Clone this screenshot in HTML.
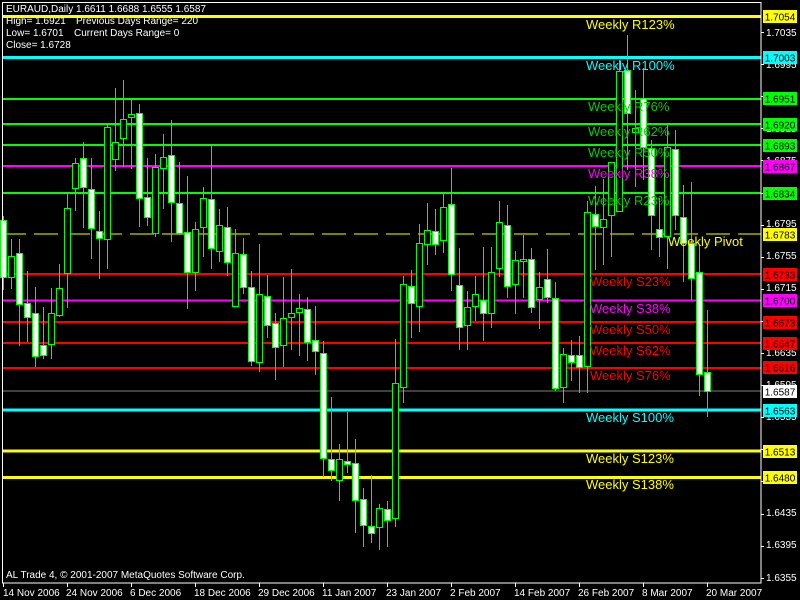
<!DOCTYPE html>
<html><head><meta charset="utf-8"><style>
html,body{margin:0;padding:0;background:#000;width:800px;height:600px;overflow:hidden}
svg{display:block;font-family:"Liberation Sans",sans-serif}
</style></head><body>
<svg id="s" width="800" height="600" xmlns="http://www.w3.org/2000/svg">
<rect width="800" height="600" fill="#000"/>
<g id="lines">
<line x1="2" x2="761" y1="16.5" y2="16.5" stroke="#ffff00" stroke-width="3"/>
<line x1="2" x2="761" y1="57.5" y2="57.5" stroke="#00ffff" stroke-width="3"/>
<line x1="2" x2="761" y1="99" y2="99" stroke="#00ff00" stroke-width="2"/>
<line x1="2" x2="761" y1="124" y2="124" stroke="#00ff00" stroke-width="2"/>
<line x1="2" x2="761" y1="145" y2="145" stroke="#00ff00" stroke-width="2"/>
<line x1="2" x2="761" y1="166" y2="166" stroke="#ff00ff" stroke-width="2"/>
<line x1="2" x2="761" y1="193" y2="193" stroke="#00ff00" stroke-width="2"/>
<line x1="2" x2="761" y1="234" y2="234" stroke="#ffff00" stroke-width="1" stroke-dasharray="24,8"/>
<line x1="2" x2="761" y1="274" y2="274" stroke="#ff0000" stroke-width="2"/>
<line x1="2" x2="761" y1="300.5" y2="300.5" stroke="#ff00ff" stroke-width="2"/>
<line x1="2" x2="761" y1="322" y2="322" stroke="#ff0000" stroke-width="2"/>
<line x1="2" x2="761" y1="343" y2="343" stroke="#ff0000" stroke-width="2"/>
<line x1="2" x2="761" y1="368" y2="368" stroke="#ff0000" stroke-width="2"/>
<line x1="2" x2="761" y1="391" y2="391" stroke="#808080" stroke-width="1"/>
<line x1="2" x2="761" y1="410" y2="410" stroke="#00ffff" stroke-width="3"/>
<line x1="2" x2="761" y1="451" y2="451" stroke="#ffff00" stroke-width="3"/>
<line x1="2" x2="761" y1="477.5" y2="477.5" stroke="#ffff00" stroke-width="3"/>
</g>
<g id="candles"></g>
<g font-size="13">
<text x="586" y="29" fill="#ffff00">Weekly R123%</text>
<text x="586" y="70" fill="#00ffff">Weekly R100%</text>
<text x="588" y="111" fill="#00cc00">Weekly R76%</text>
<text x="588" y="136" fill="#00cc00">Weekly R62%</text>
<text x="588" y="157" fill="#00cc00">Weekly R50%</text>
<text x="588" y="178" fill="#ff00ff">Weekly R38%</text>
<text x="588" y="205" fill="#00cc00">Weekly R23%</text>
<text x="668" y="246" fill="#ffff00">Weekly Pivot</text>
<text x="590" y="286" fill="#ff0000">Weekly S23%</text>
<text x="590" y="313" fill="#ff00ff">Weekly S38%</text>
<text x="590" y="334" fill="#ff0000">Weekly S50%</text>
<text x="590" y="355" fill="#ff0000">Weekly S62%</text>
<text x="590" y="380" fill="#ff0000">Weekly S76%</text>
<text x="586" y="422" fill="#00ffff">Weekly S100%</text>
<text x="586" y="463" fill="#ffff00">Weekly S123%</text>
<text x="586" y="489" fill="#ffff00">Weekly S138%</text>
</g>
<g fill="#fff" font-size="10">
<text x="6" y="12">EURAUD,Daily  1.6611 1.6688 1.6555 1.6587</text>
<text x="6" y="24">High= 1.6921</text><text x="76" y="24">Previous Days Range= 220</text>
<text x="6" y="36">Low= 1.6701</text><text x="74" y="36">Current Days Range= 0</text>
<text x="6" y="48">Close= 1.6728</text>
<text x="6" y="578">AL Trade 4, © 2001-2007 MetaQuotes Software Corp.</text>
</g>
<rect x="2.5" y="2.5" width="758.5" height="580.5" fill="none" stroke="#fff" stroke-width="1"/>
<g id="ticks" stroke="#fff"></g>
<g fill="#fff" font-size="10">
<text x="766" y="36">1.7035</text><text x="766" y="68">1.6995</text><text x="766" y="100">1.6955</text><text x="766" y="132">1.6915</text><text x="766" y="164">1.6875</text><text x="766" y="196">1.6835</text><text x="766" y="227">1.6795</text><text x="766" y="259">1.6755</text><text x="766" y="291">1.6715</text><text x="766" y="323">1.6675</text><text x="766" y="356">1.6635</text><text x="766" y="388">1.6595</text><text x="766" y="420">1.6555</text><text x="766" y="452">1.6515</text><text x="766" y="484">1.6475</text><text x="766" y="516">1.6435</text><text x="766" y="548">1.6395</text><text x="766" y="581">1.6355</text>
</g>
<g font-size="10" text-anchor="middle">
<rect x="763" y="10" width="34" height="13" fill="#ffff00"/><text x="780" y="20.5">1.7054</text>
<rect x="763" y="51" width="34" height="13" fill="#00ffff"/><text x="780" y="61.5">1.7003</text>
<rect x="763" y="92" width="34" height="13" fill="#00ff00"/><text x="780" y="102.5">1.6951</text>
<rect x="763" y="118" width="34" height="13" fill="#00ff00"/><text x="780" y="128.5">1.6920</text>
<rect x="763" y="139" width="34" height="13" fill="#00ff00"/><text x="780" y="149.5">1.6893</text>
<rect x="763" y="160" width="34" height="13" fill="#ff00ff"/><text x="780" y="170.5">1.6867</text>
<rect x="763" y="187" width="34" height="13" fill="#00ff00"/><text x="780" y="197.5">1.6834</text>
<rect x="763" y="228" width="34" height="13" fill="#ffff00"/><text x="780" y="238.5">1.6783</text>
<rect x="763" y="268" width="34" height="13" fill="#ff0000"/><text x="780" y="278.5">1.6733</text>
<rect x="763" y="294" width="34" height="13" fill="#ff00ff"/><text x="780" y="304.5">1.6700</text>
<rect x="763" y="316" width="34" height="13" fill="#ff0000"/><text x="780" y="326.5">1.6673</text>
<rect x="763" y="337" width="34" height="13" fill="#ff0000"/><text x="780" y="347.5">1.6647</text>
<rect x="763" y="361" width="34" height="13" fill="#ff0000"/><text x="780" y="371.5">1.6616</text>
<rect x="763" y="385" width="34" height="13" fill="#ffffff"/><text x="780" y="395.5">1.6587</text>
<rect x="763" y="404" width="34" height="13" fill="#00ffff"/><text x="780" y="414.5">1.6563</text>
<rect x="763" y="445" width="34" height="13" fill="#ffff00"/><text x="780" y="455.5">1.6513</text>
<rect x="763" y="471" width="34" height="13" fill="#ffff00"/><text x="780" y="481.5">1.6480</text>
</g>
<g fill="#fff" font-size="10">
<text x="3" y="596">14 Nov 2006</text><text x="66" y="596">24 Nov 2006</text><text x="130" y="596">6 Dec 2006</text><text x="194" y="596">18 Dec 2006</text><text x="258" y="596">29 Dec 2006</text><text x="322" y="596">11 Jan 2007</text><text x="386" y="596">23 Jan 2007</text><text x="450" y="596">2 Feb 2007</text><text x="514" y="596">14 Feb 2007</text><text x="578" y="596">26 Feb 2007</text><text x="642" y="596">8 Mar 2007</text><text x="706" y="596">20 Mar 2007</text>
</g>
</svg>
<script>
var d=[
[3,220,277,216,290,1],[11,256,277,239,289,0],[19,253,304,239,346,1],[27,303,317,271,342,1],[35,313,356,287,367,1],[43,345,355,307,359,1],[51,313,344,288,359,0],[59,288,315,264,317,0],[67,208,273,193,308,0],[75,163,188,158,211,0],[83,158,187,142,228,1],[91,189,228,158,259,1],[99,231,238,211,279,1],[107,127,239,125,269,0],[115,142,159,88,171,0],[123,119,138,80,167,0],[131,114,117,100,169,0],[139,113,198,104,227,1],[147,197,217,158,226,1],[155,167,233,154,237,0],[163,157,168,134,209,0],[171,155,202,120,242,1],[179,203,233,162,235,1],[187,232,272,176,309,1],[195,229,272,222,291,0],[203,198,227,187,257,0],[211,199,248,146,269,1],[219,225,251,209,262,0],[227,227,262,207,276,1],[235,253,306,229,307,0],[243,254,287,238,294,1],[251,287,361,271,366,1],[259,294,362,244,372,0],[267,296,325,275,338,1],[275,323,347,313,380,1],[283,318,345,277,367,0],[291,313,317,269,350,0],[299,308,312,294,356,0],[307,309,342,297,361,1],[315,340,351,306,375,1],[323,353,458,341,477,1],[331,459,470,397,481,1],[339,459,480,444,501,0],[347,461,464,412,473,1],[355,463,500,439,533,1],[363,499,525,488,547,1],[371,526,533,475,543,1],[379,508,527,504,550,0],[387,509,520,501,547,1],[395,383,518,339,527,0],[403,284,387,276,403,0],[411,286,303,270,338,1],[419,243,306,224,332,0],[427,230,244,203,265,0],[435,231,244,209,255,1],[443,207,240,193,253,0],[451,204,274,168,291,1],[459,285,327,248,350,1],[467,307,325,291,350,0],[475,294,306,276,321,0],[483,300,313,247,341,1],[491,272,313,247,328,0],[499,222,268,201,277,0],[507,225,286,205,298,1],[515,260,284,251,314,0],[523,259,261,235,298,0],[531,259,307,248,313,1],[539,287,299,272,329,0],[547,279,297,249,303,1],[555,298,388,282,391,1],[563,354,387,348,403,0],[571,355,362,340,381,1],[579,355,367,336,393,1],[587,212,366,201,393,0],[595,214,226,186,270,1],[603,219,227,179,265,0],[611,162,215,163,257,0],[619,71,211,60,212,0],[627,70,113,35,170,1],[635,128,132,90,187,0],[643,98,147,68,180,1],[651,148,215,140,250,1],[659,229,237,198,257,1],[667,147,236,125,269,0],[675,149,215,130,230,1],[683,217,243,185,282,1],[691,243,278,182,300,1],[699,272,374,245,396,1],[707,372,391,310,417,1]];
var g=document.getElementById('candles'),h='';
d.forEach(function(c){var x=c[0];
h+='<line x1="'+(x+.5)+'" x2="'+(x+.5)+'" y1="'+c[3]+'" y2="'+c[4]+'" stroke="#00ff00"/>';
h+='<rect x="'+(x-2.5)+'" y="'+(c[1]+.5)+'" width="6" height="'+Math.max(1,c[2]-c[1])+'" fill="'+(c[5]?'#fff':'#000')+'" stroke="#00ff00"/>';});
g.innerHTML=h;
var t=document.getElementById('ticks'),s='';
for(var i=0;i<18;i++){var y=Math.round(32+i*32.1)+.5;s+='<line x1="761" x2="764" y1="'+y+'" y2="'+y+'"/>';}
[3,67,131,195,259,323,387,451,515,579,643,707].forEach(function(x){s+='<line x1="'+(x+.5)+'" x2="'+(x+.5)+'" y1="583" y2="587"/>';});
t.innerHTML=s;
</script>
</body></html>
